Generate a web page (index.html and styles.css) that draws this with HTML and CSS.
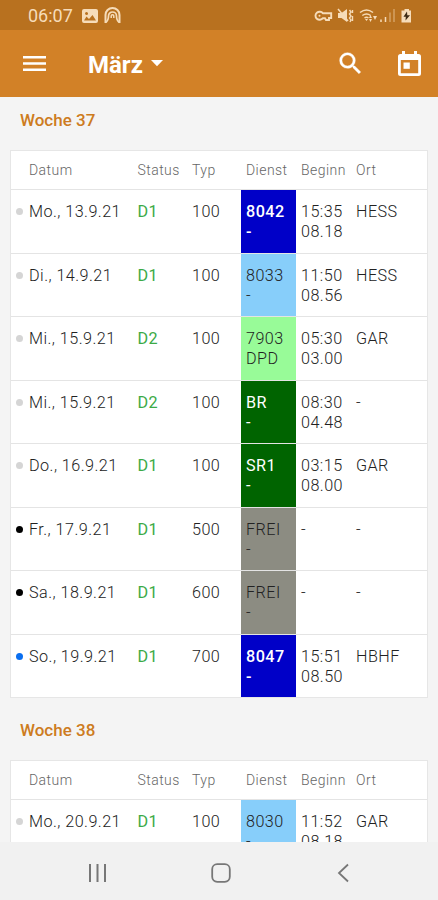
FILE: index.html
```html
<!DOCTYPE html>
<html lang="de">
<head>
<meta charset="utf-8">
<meta name="viewport" content="width=device-width">
<title>Dienstplan</title>
<link rel="stylesheet" href="styles.css">
</head>
<body>
<div class="status-bar">
  <span class="clock">06:07</span>
  <svg class="st-image" width="16" height="14" viewBox="0 0 16 14"><path fill="currentColor" fill-rule="evenodd" d="M2 0h12a2 2 0 0 1 2 2v10a2 2 0 0 1-2 2H2a2 2 0 0 1-2-2V2a2 2 0 0 1 2-2zm0 11.500h12L10.500 6 7 10 4.500 7.500zM4.500 3a1.500 1.500 0 1 0 .01 3 1.500 1.500 0 0 0 0-3z"/></svg>
  <svg class="st-arch" width="17" height="17" viewBox="0 0 17 17" fill="none" stroke="currentColor"><path stroke-width="2" d="M1.500 16V8a7 7 0 0 1 14 0v8"/><path stroke-width="1.700" d="M1.500 15.500c2.500-1.500 3-3.500 3-6.500a4 4 0 0 1 8 0c0 3 .5 5 3 6.500"/><path stroke-width="1.500" d="M7.200 11V9a1.300 1.300 0 0 1 2.600 0v2"/></svg>
  <svg class="st-right" width="98" height="16" viewBox="0 0 98 16" fill="none" stroke="currentColor">
    <path stroke-width="1.900" d="M9 5.300A4.200 4 0 1 0 9 10.200h2l1 1.800h3v-2h2.200V5.300z"/><circle cx="5.500" cy="7.800" r="1" fill="currentColor" stroke="none"/>
    <path fill="currentColor" stroke="none" d="M24 5h3.500L33 1v13l-5.500-4H24z"/><path stroke-width="1.500" d="M24 1l10 12"/><path stroke-width="1.400" d="M35.500 2l1.500 2-1.500 2L37 8l-1.500 2 1.500 2-1 2M38.500 2v3M38.500 8v5"/>
    <path stroke-width="1.500" d="M46 4.500q6.500-5 13 0M48.300 7.500q4.200-3.200 8.400 0M50.500 10q2-1.500 4 0"/><path stroke="none" fill="currentColor" d="M51 11h3l-1.500 2zM55 10h3l-1.500-3zM59 8h4l-2 4zM55 11h3l-1.500 3z"/>
    <path stroke-width="1.500" d="M67 14v-2.500M71.500 14V9"/><path opacity=".45" stroke-width="1.500" d="M76 14V4.500M80 14V1"/>
    <path fill="currentColor" stroke="none" d="M88 2.500h2.500V1H95v1.500h2V14.500h-9.500V2.500z"/><path fill="#3d2a14" stroke="none" d="M93 3.500L89.500 8.700h2.300L91.500 12.500 96 7.200h-2.700z"/>
  </svg>
</div>
<header class="app-bar">
  <svg class="menu" width="24" height="16" viewBox="0 0 24 16" fill="currentColor"><path d="M0 0h23v2.500H0zM0 6.300h23v2.500H0zM0 12.600h23v2.500H0z"/></svg>
  <h1 class="title">März</h1>
  <svg class="caret" width="12" height="7" viewBox="0 0 12 7" fill="currentColor"><path d="M0 0h12L6 6.300z"/></svg>
  <svg class="search" width="29" height="29" viewBox="0 0 24 24" fill="currentColor" stroke="currentColor" stroke-width=".3"><path d="M15.500 14h-.79l-.28-.27A6.471 6.471 0 0 0 16 9.500 6.500 6.500 0 1 0 9.500 16c1.610 0 3.090-.59 4.230-1.570l.27.28v.79l5 4.990L20.490 19l-4.990-5zm-6 0C7.010 14 5 11.990 5 9.500S7.010 5 9.500 5 14 7.010 14 9.500 11.990 14 9.500 14z"/></svg>
  <svg class="calendar" width="23" height="26" viewBox="0 0 23 26" fill="currentColor"><path fill-rule="evenodd" d="M4 0h3v3h9V0h3v3h1.500A2.500 2.500 0 0 1 23 5.500v17a2.500 2.500 0 0 1-2.500 2.500h-18A2.500 2.500 0 0 1 0 22.500v-17A2.500 2.500 0 0 1 2.500 3H4zM2.800 9v13.300h17.400V9z"/><path d="M5.500 11.500h6.300v6.300H5.500z"/></svg>
</header>
<main class="content">
  <h2 class="week">Woche 37</h2>
  <section class="card">
    <div class="row head"><span>Datum</span><span>Status</span><span>Typ</span><span>Dienst</span><span>Beginn</span><span>Ort</span></div>
    <div class="row"><span class="date grey">Mo., 13.9.21</span><span class="status">D1</span><span>100</span><span class="duty blue">8042<br>-</span><span>15:35<br>08.18</span><span>HESS</span></div>
    <div class="row"><span class="date grey">Di., 14.9.21</span><span class="status">D1</span><span>100</span><span class="duty sky">8033<br>-</span><span>11:50<br>08.56</span><span>HESS</span></div>
    <div class="row"><span class="date grey">Mi., 15.9.21</span><span class="status">D2</span><span>100</span><span class="duty mint">7903<br>DPD</span><span>05:30<br>03.00</span><span>GAR</span></div>
    <div class="row"><span class="date grey">Mi., 15.9.21</span><span class="status">D2</span><span>100</span><span class="duty green">BR<br>-</span><span>08:30<br>04.48</span><span>-</span></div>
    <div class="row"><span class="date grey">Do., 16.9.21</span><span class="status">D1</span><span>100</span><span class="duty green">SR1<br>-</span><span>03:15<br>08.00</span><span>GAR</span></div>
    <div class="row"><span class="date black">Fr., 17.9.21</span><span class="status">D1</span><span>500</span><span class="duty free">FREI<br>-</span><span>-</span><span>-</span></div>
    <div class="row"><span class="date black">Sa., 18.9.21</span><span class="status">D1</span><span>600</span><span class="duty free">FREI<br>-</span><span>-</span><span>-</span></div>
    <div class="row"><span class="date azure">So., 19.9.21</span><span class="status">D1</span><span>700</span><span class="duty blue">8047<br>-</span><span>15:51<br>08.50</span><span>HBHF</span></div>
  </section>
  <h2 class="week">Woche 38</h2>
  <section class="card">
    <div class="row head"><span>Datum</span><span>Status</span><span>Typ</span><span>Dienst</span><span>Beginn</span><span>Ort</span></div>
    <div class="row"><span class="date grey">Mo., 20.9.21</span><span class="status">D1</span><span>100</span><span class="duty sky">8030<br>-</span><span>11:52<br>08.18</span><span>GAR</span></div>
  </section>
</main>
<nav class="nav-bar">
  <svg width="20" height="20" viewBox="0 0 20 20" fill="none" stroke="currentColor" stroke-width="2"><path d="M2 1v18M9.500 1v18M17 1v18"/></svg>
  <svg width="20" height="20" viewBox="0 0 20 20" fill="none" stroke="currentColor" stroke-width="1.800"><rect x="1.200" y="1.200" width="17.600" height="17.600" rx="5"/></svg>
  <svg width="20" height="20" viewBox="0 0 20 20" fill="none" stroke="currentColor" stroke-width="1.800"><path d="M14 1.500L5 10l9 8.500"/></svg>
</nav>
</body>
</html>
```
FILE: styles.css
```css
* { box-sizing: border-box; }
body {
  margin: 0;
  height: 900px;
  overflow: hidden;
  display: flex;
  flex-direction: column;
  background: #f4f4f4;
  color: #222;
  font-family: Roboto, sans-serif;
}
svg { display: block; flex: none; }
.status-bar {
  height: 30px;
  flex: none;
  display: flex;
  align-items: center;
  padding: 1px 26px 0 28px;
  background: #b8711f;
  color: #f6dcb9;
}
.clock { width: 54px; font-size: 18px; }
.st-arch { margin-left: 6px; }
.st-right { margin-left: auto; }
.app-bar {
  height: 67px;
  flex: none;
  display: flex;
  align-items: center;
  padding: 0 17px 0 23px;
  background: #d28127;
  color: #fff;
}
.title {
  margin: 2px 0 0 41px;
  width: 55px;
  font-size: 24px;
  font-weight: 700;
  line-height: 30px;
}
.caret { margin-left: 8px; }
.search { margin-left: auto; }
.calendar { margin-left: 33px; }
.content {
  flex: 1;
  min-height: 0;
  overflow: hidden;
}
.week {
  margin: 0;
  padding: 11px 20px 0;
  height: 53px;
  color: #cd7b20;
  font-size: 17px;
  font-weight: 500;
  line-height: 24px;
}
.card {
  margin: 0 10px 9px;
  border: 1px solid #e6e6e6;
  background: #fff;
}
.row {
  display: grid;
  grid-template-columns: 121.500px 54.500px 54px 55px 55px 1fr;
  height: 63.500px;
  border-top: 1px solid #e4e4e4;
  font-size: 16.200px;
  font-weight: 300;
  line-height: 20px;
  letter-spacing: .45px;
}
.row > span { padding: 12px 0 0 5px; white-space: nowrap; }
.row > .date { display: flex; align-items: flex-start; }
.date::before {
  content: "";
  width: 7px;
  height: 7px;
  margin: 6px 6px 0 0;
  border-radius: 50%;
}
.grey::before { background: #d5d5d5; }
.black::before { background: #000; }
.azure::before { background: #0a6ff0; }
.row > .status { color: #3caa46; font-weight: 400; }
.blue { background: #0000c8; color: #fff; font-weight: 500; }
.sky { background: #87cefa; }
.mint { background: #98fb98; }
.green { background: #006400; color: #fff; font-weight: 400; }
.free { background: #8c8c82; }
.head {
  height: 38px;
  border-top: 0;
  color: #666;
  font-size: 14px;
}
.row.head > span { padding-top: 9px; }
.row.head > span:first-child { padding-left: 18px; }
.nav-bar {
  height: 58px;
  flex: none;
  display: flex;
  align-items: center;
  justify-content: space-between;
  padding: 4px 84px 0 88px;
  background: #f1f1f1;
  color: #777;
}
```
